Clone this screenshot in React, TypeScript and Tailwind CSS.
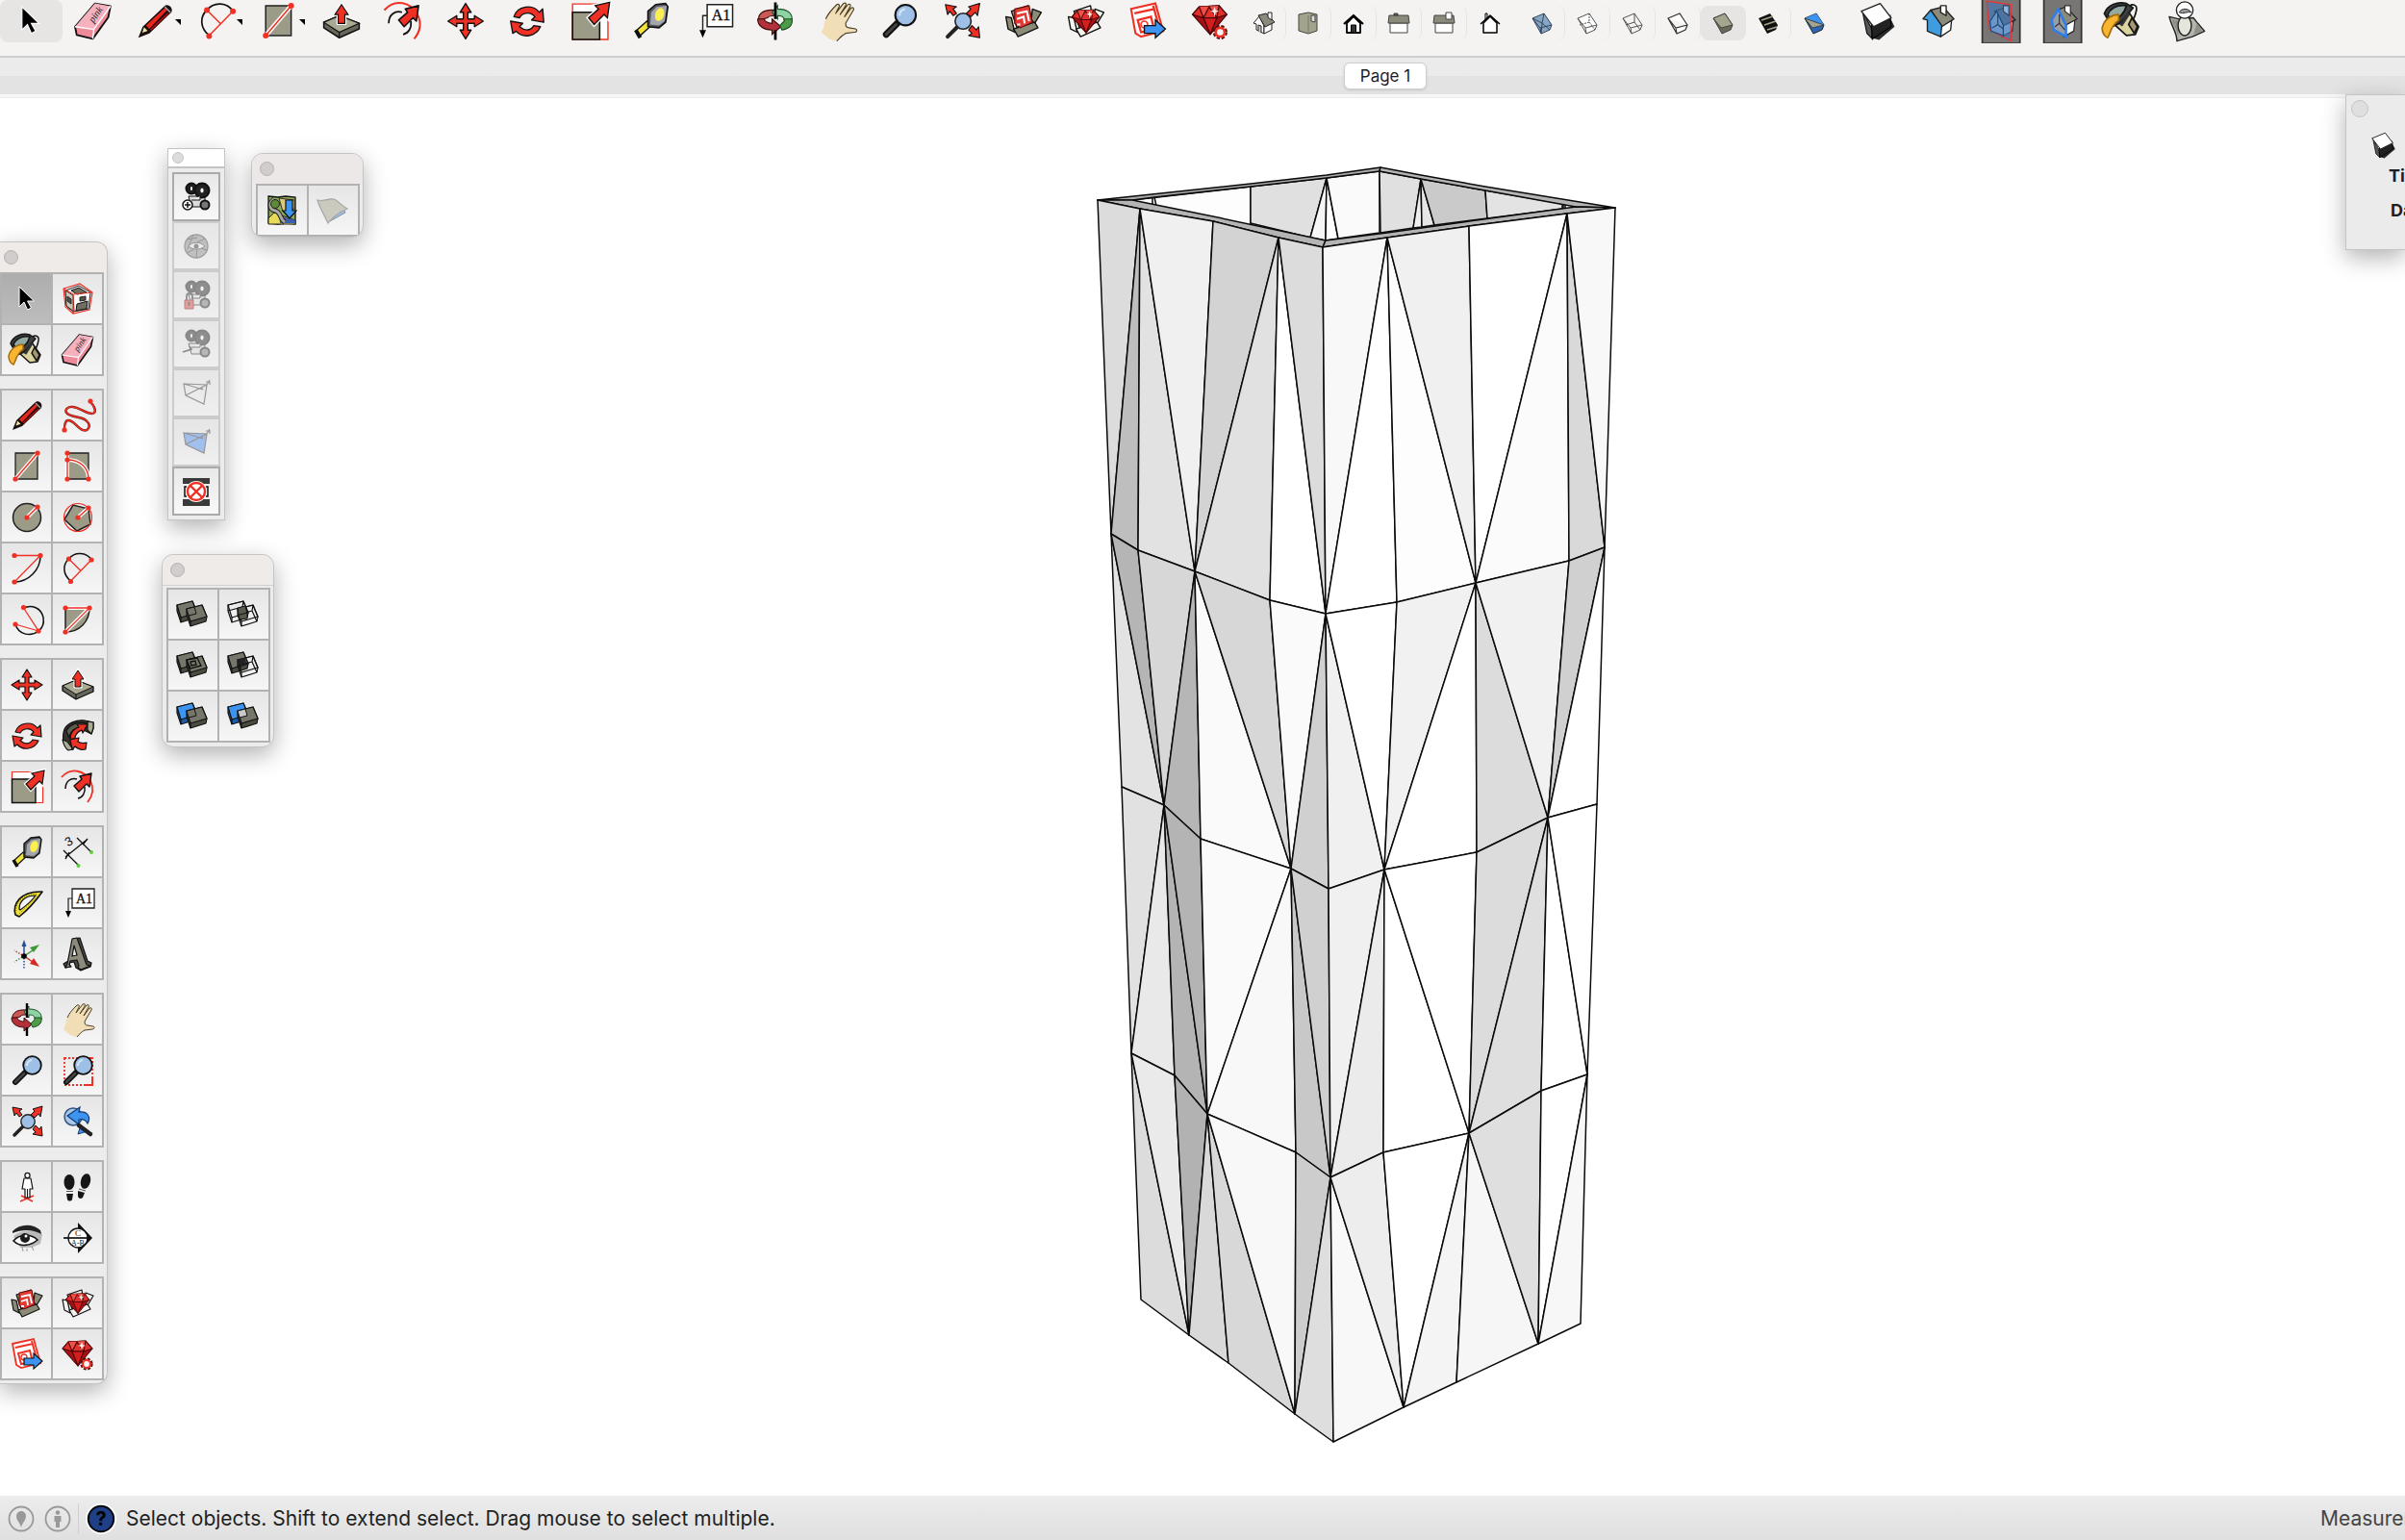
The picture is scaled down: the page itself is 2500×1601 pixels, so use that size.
import type { ReactNode } from "react";

const RED = "#ee3124";
const TAN = "#9c9b87";
const BLUE = "#3d94f0";

const Dot = ({ x, y }: { x: number; y: number }) => (
  <circle cx={x} cy={y} r="2.6" fill={RED} />
);

const lens = (
  <>
    <path d="M18 22 8 32" stroke="#111" strokeWidth="6" strokeLinecap="round" />
    <path d="M17 23 8 32" stroke="#444" strokeWidth="2.5" strokeLinecap="round" />
    <circle cx="25.5" cy="14.5" r="9.3" fill="#9fc0e6" stroke="#111" strokeWidth="1.8" />
    <path d="M20 15a6 6 0 0 1 5-6" stroke="#d6e6f8" strokeWidth="2" fill="none" />
  </>
);

const bucket = (
  <g stroke="#161616" strokeWidth="1.5" strokeLinejoin="round">
    <path d="M25 8c2-5 8-3 7 2s-2 8-4 9" fill="none" />
    <path d="M12 23 23 9l11 16-3 7-8 1z" fill="#dcd4a0" />
    <path d="m28 17 5 8-3 6-5-8z" fill="#a39873" />
    <path d="M3 13C6 5 15 2 23 4l6 4-12 14-7 3z" fill="#3c4042" />
    <path d="M6 14c3-6 9-9 17-8-2 7-7 12-14 13z" fill="#93aaa3" />
    <path d="M16 14C10 14 3 18 1 26c0 4 2 8 5 9 3-4 2-10 10-16z" fill="#f7b531" stroke="#a56c0b" />
    <path d="m18 24 7-11" strokeWidth="3" stroke="#333" />
  </g>
);

const boxBack = (fill: string) => (
  <g fill={fill} stroke="#111" strokeWidth="1.2" strokeLinejoin="round">
    <path d="m9 11 15-5 2 13-12 7z" />
    <path d="m4 16 5 1 3 13-6-3z" />
    <path d="m28 9 8 3-6 10-3-3z" />
    <path d="m11 27 19-6 3 5-18 8z" />
  </g>
);

const gem = (
  <g stroke="#4a0508" strokeWidth="1.1" strokeLinejoin="round">
    <path d="m4 14 6-7 18-1 7 8-15 18z" fill="#a81016" />
    <path d="m4 14 6-7 18-1 7 8-9 3H14z" fill="#e2302a" />
    <path d="m10 7 4 10 5-10 7 10 2-11" fill="#f05048" />
    <path d="m14 17 6 15 6-15z" fill="#d3201f" />
    <path d="m24 7 1 3 3 1-3 1-1 4-1-4-3-1 3-1z" fill="#ffe9e0" stroke="none" />
  </g>
);

const camera = (
  <g stroke="#111" strokeWidth="1">
    <path d="M12 19h17v11H15z" fill="#ddd" />
    <circle cx="15" cy="11" r="5.5" fill="#222" strokeWidth="2" />
    <circle cx="26" cy="13" r="7.5" fill="#222" strokeWidth="2" />
    <path d="M15 23h9v-4" fill="#eee" />
    <circle cx="29" cy="28" r="4.5" fill="#777" strokeWidth="2" />
    <ellipse cx="15" cy="11" rx="1.6" ry="2.6" fill="#fff" />
    <ellipse cx="26" cy="13" rx="2.2" ry="3" fill="#fff" />
  </g>
);

const slab = (x: number, y: number, fill: string, side: string) => (
  <g transform={`translate(${x} ${y})`} stroke="#111" strokeWidth="1.2" strokeLinejoin="round">
    <path d="m0 4 16-4 5 12-1 5-16 5-4-12z" fill={side} />
    <path d="m0 4 16-4 5 12-17 5z" fill={fill} />
    {fill !== "none" && <path d="m4 17v5" />}
    {fill === "none" && <path d="M4 17v5M0 10l15-4 5 11M16 0l-1 6" fill="none" />}
  </g>
);

const tools: Record<string, ReactNode> = {
  Select: (
    <path d="M12 7v21l5-5 3.500 8 4-2-4-7h7z" fill="#000" stroke="#fff" strokeWidth="1" />
  ),
  Component: (
    <>
      <path d="m7 11 14-5 12 7-2 17-16 3-7-6z" fill="#fff" stroke="#222" />
      <path d="m7 11 8 5 1 17-8-6z" fill="#c9c8bd" stroke="#222" />
      <path d="m13 11 8-3 8 5-10 2zM19 25l11-3-1 8-11 2z" fill="#6f6e60" stroke="#111" />
      <path d="m9 17 4 3v5l-4-3zM22 18l6-1v4l-6 1z" fill="#55544a" stroke="#222" />
      <path d="m5 9 17-5 13 9-3 18-17 4-8-7zm0 0 10 6 20-2M15 15v20" fill="none" stroke={RED} strokeWidth="1.200" />
    </>
  ),
  Paint: bucket,
  Eraser: (
    <>
      <path d="M3.500 25 21.500 4l14 2.500-2 10L19.500 36 5 32.500z" fill="#ee8b9b" stroke="#111" strokeWidth="1.600" strokeLinejoin="round" />
      <path d="M3.500 25 21.500 4l14 2.500-15 21z" fill="#f6b1bf" />
      <path d="m3.500 25 17 2.500 15-21M20.500 27.500l-1 8.500" fill="none" stroke="#fff" strokeWidth="1.200" />
      <text x="0" y="0" transform="translate(20 22) rotate(-55)" fontSize="9" fontFamily="Liberation Serif, serif" fontStyle="italic" fill="#222">
        pink
      </text>
    </>
  ),
  Line: (
    <>
      <path d="m5 35 4-10L29 6c2-2 8 1 6 6L15 31z" fill="#1a0b0b" />
      <path d="M12 24 29 8l2 2-16 17z" fill="#e8261d" />
      <path d="m16 28 16-15" stroke="#a80f10" strokeWidth="1.500" />
      <path d="m8 31 2-6 4 4z" fill="#f4e9a4" stroke="#111" strokeWidth=".7" />
      <path d="m29 7 5 5" stroke="#999" strokeWidth="1.500" />
    </>
  ),
  Freehand: (
    <>
      <path
        d="M33 6c4 4 6 9 4 11-4 4-14-5-22-6-6-1-10 4-6 7 6 5 18 2 22 10 2 4-1 9-6 7-6-2-9-10-15-10-3 0-4 4-4 9"
        fill="none"
        stroke="#6d1010"
        strokeWidth="2.400"
      />
      <path
        d="M33 6c4 4 6 9 4 11-4 4-14-5-22-6-6-1-10 4-6 7 6 5 18 2 22 10 2 4-1 9-6 7-6-2-9-10-15-10-3 0-4 4-4 9"
        fill="none"
        stroke={RED}
        strokeWidth="1.400"
      />
      <Dot x={33} y={5} />
      <Dot x={6} y={35} />
    </>
  ),
  Rectangle: (
    <>
      <path d="M8 6h23v27H8z" fill={TAN} stroke="#222" strokeWidth="1.300" />
      <path d="M8 33 31 6" stroke="#fff" strokeWidth="4" />
      <path d="M8 33 31 6" stroke={RED} strokeWidth="1.400" />
      <Dot x={8} y={33} />
      <Dot x={31} y={6} />
    </>
  ),
  "Rotated Rectangle": (
    <>
      <path d="M9 6h22v27H9z" fill={TAN} stroke="#222" strokeWidth="1.300" />
      <path d="M9 6v27M9 13c13 0 22 8 22 20" stroke="#fff" strokeWidth="4" fill="none" />
      <path d="M9 6v27M9 13c13 0 22 8 22 20" stroke={RED} strokeWidth="1.400" fill="none" />
      <Dot x={9} y={6} />
      <Dot x={9} y={13} />
      <Dot x={9} y={33} />
      <Dot x={31} y={33} />
    </>
  ),
  Circle: (
    <>
      <circle cx="20" cy="20" r="14.500" fill={TAN} stroke="#222" strokeWidth="1.500" />
      <path d="m20 20 11-11" stroke="#fff" strokeWidth="4" />
      <path d="m20 20 11-11" stroke={RED} strokeWidth="1.400" />
      <Dot x={20} y={20} />
      <Dot x={31} y={9} />
    </>
  ),
  Polygon: (
    <>
      <path d="m6 22 9-15 16 4 2 16-14 7z" fill={TAN} stroke="#222" strokeWidth="1.500" />
      <circle cx="20" cy="20" r="14.500" fill="none" stroke={RED} strokeWidth="1.200" />
      <path d="m20 20 11-10" stroke="#fff" strokeWidth="4" />
      <path d="m20 20 11-10" stroke={RED} strokeWidth="1.400" />
      <Dot x={20} y={20} />
      <Dot x={31} y={10} />
    </>
  ),
  Arc: (
    <>
      <path d="M34 7c0 14-12 27-27 27" fill="none" stroke="#111" strokeWidth="1.500" />
      <path d="M7 6.500h27L7 34" fill="none" stroke={RED} strokeWidth="1.300" />
      <Dot x={7} y={6.5} />
      <Dot x={34} y={6.5} />
      <Dot x={7} y={34} />
    </>
  ),
  "2 Point Arc": (
    <>
      <path d="M12.500 33C4 26 4 16 10.500 10 17 2 29 3 34 11" fill="none" stroke="#111" strokeWidth="1.500" />
      <path d="m10.500 10 12 12M12.500 33 34 11" stroke={RED} strokeWidth="1.300" />
      <Dot x={10.5} y={10} />
      <Dot x={34} y={11} />
      <Dot x={12.5} y={33.5} />
    </>
  ),
  "3 Point Arc": (
    <>
      <path d="M16.500 8C25 4 35 8 37 18c1 6-1 11-5 14-9 7-21 3-24-7" fill="none" stroke="#111" strokeWidth="1.500" />
      <path d="M16.500 8 32 32 8 25" fill="none" stroke={RED} strokeWidth="1.300" />
      <Dot x={16.5} y={7.5} />
      <Dot x={32} y={32} />
      <Dot x={8} y={25} />
    </>
  ),
  Pie: (
    <>
      <path d="M7 8h25c0 14-10 25-25 25z" fill={TAN} stroke="#222" strokeWidth="1.500" />
      <path d="M7 8h25L7 33" fill="none" stroke="#fff" strokeWidth="4" />
      <path d="M7 8h25L7 33" fill="none" stroke={RED} strokeWidth="1.300" />
      <Dot x={7} y={8} />
      <Dot x={32} y={8} />
      <Dot x={7} y={33} />
    </>
  ),
  Move: (
    <path
      d="m20 4 5 8h-3v6h6v-3l8 5-8 5v-3h-6v6h3l-5 8-5-8h3v-6h-6v3l-8-5 8-5v3h6v-6h-3z"
      fill={RED}
      stroke="#111"
      strokeWidth="1.200"
      strokeLinejoin="round"
    />
  ),
  "Push/Pull": (
    <>
      <path d="m4 21 14-6 18 7v5L18 35 4 26z" fill="#66665a" stroke="#111" strokeWidth="1.300" strokeLinejoin="round" />
      <path d="m4 21 14-6 18 7-18 8z" fill="#a9a994" stroke="#111" strokeWidth="1" />
      <path d="M18 30v5" stroke="#111" />
      <path d="M20 5 14 14h3v8h6v-8h3z" fill={RED} stroke="#fff" strokeWidth="3" />
      <path d="M20 5 14 14h3v8h6v-8h3z" fill={RED} stroke="#111" strokeWidth="1" />
    </>
  ),
  Rotate: (
    <g fill={RED} stroke="#111" strokeWidth="1.200" strokeLinejoin="round">
      <path d="M8 16c3-10 17-12 23-4l3-3 1 12-11-2 3-3c-4-5-11-4-14 1z" />
      <path d="M32 25c-4 9-16 11-22 4l-3 2-2-11 11 2-3 3c5 4 10 4 13-1z" />
    </g>
  ),
  "Follow Me": (
    <g stroke="#111" strokeWidth="1.200" strokeLinejoin="round">
      <path d="M10 34C5 31 3 22 6 13 9 7 18 3 27 4l9 2v6l-2 6-6-3-8-1c-4 2-5 7-4 11l-1 9z" fill="#33342f" />
      <path d="M8 15C11 8 20 5 29 7l-5 4c-7 0-12 4-13 11z" fill="#5d5d51" />
      <path d="m30 5 6 1v6l-2 6-4-4z" fill="#a9a994" />
      <path d="m4 24 5 2 6 8-5 1c-3-2-5-6-6-11z" fill="#a9a994" />
      <path d="M12 23c0-6 3-10 9-12l-2-3 11 0-5 9-1-3c-5 2-7 5-7 9z" fill={RED} />
      <path d="m12 24 9-2-1 4c3 2 5 2 9 1l-1 7c-5 1-8 0-11-3l-3 3z" fill={RED} />
    </g>
  ),
  Scale: (
    <>
      <path d="M4.500 4.500h32v32h-32z" fill="#fff" stroke={RED} strokeWidth="1.200" />
      <path d="M4.500 12h24.500v24.500H4.500z" fill={TAN} stroke="#111" strokeWidth="1.400" />
      <path d="m38 3-13 3 3 3-9 8 5 6 9-9 3 3z" fill={RED} stroke="#fff" strokeWidth="3.500" />
      <path d="m38 3-13 3 3 3-9 8 5 6 9-9 3 3z" fill={RED} stroke="#111" strokeWidth="1.200" />
    </>
  ),
  Offset: (
    <>
      <path d="M3 10C13-1 27 3 33 14c4 8 2 16-3 22" fill="none" stroke={RED} strokeWidth="1.800" />
      <path d="M7 22c0-8 6-12 12-10M27 20c1 6-2 11-7 12" fill="none" stroke="#111" strokeWidth="1.500" />
      <path d="m34 6-12 3 2 3-8 7 5 6 8-8 3 3z" fill={RED} stroke="#111" strokeWidth="1.400" strokeLinejoin="round" />
    </>
  ),
  "Tape Measure": (
    <>
      <path d="M6 29 16 20l4 4L9 34z" fill="#f2e33b" stroke="#111" strokeWidth="1.200" />
      <path d="m6 28 4 7" stroke="#111" strokeWidth="3.500" />
      <path d="m17 11 7-6 9-1 2 3-2 14-6 5-10-1z" fill="#55575b" stroke="#111" strokeWidth="1.400" strokeLinejoin="round" />
      <path d="m20 12 5-5 9-1-2 14-5 4-8-1z" fill="#a3a6ad" />
      <ellipse cx="27.500" cy="14" rx="4" ry="6" transform="rotate(18 27.500 14)" fill="#fbf04f" />
    </>
  ),
  Dimension: (
    <>
      <path d="M7 25 28 8M5 18l16 16M19 5l15 15" stroke="#111" strokeWidth="1.300" />
      <path d="m7 27 4-7M25 12l5-6" stroke="#111" strokeWidth="1.500" />
      <text x="7" y="13" transform="rotate(-30 11 9)" fontSize="13" fontFamily="Liberation Sans, sans-serif" fill="#111">
        3
      </text>
      <circle cx="20.500" cy="34" r="2" fill="#5bd03c" />
      <circle cx="34" cy="20" r="2" fill="#5bd03c" />
    </>
  ),
  Protractor: (
    <>
      <path d="M8 32C5 22 12 7 36 8 29 18 22 26 12 34z" fill="#f0e13a" stroke="#111" strokeWidth="1.600" strokeLinejoin="round" />
      <path d="M12 26c0-8 6-14 17-14-5 7-9 10-16 15z" fill="#f4f4f4" stroke="#111" strokeWidth="1.200" />
      <path d="m12 31 21-20M9 28c-1-8 6-17 22-18" stroke="#5b5410" strokeWidth=".8" strokeDasharray="1 1.500" fill="none" />
    </>
  ),
  Text: (
    <>
      <path d="M14 5h23v20H14z" fill="#fff" stroke="#222" strokeWidth="1.300" />
      <text x="18" y="19.500" fontSize="14" fontFamily="Liberation Serif, serif" fill="#111" stroke="#111" strokeWidth=".3">
        A1
      </text>
      <path d="M14 15h-4v15" fill="none" stroke="#222" strokeWidth="1.200" />
      <path d="M7 28h6l-3 7z" fill="#000" />
    </>
  ),
  Axes: (
    <>
      <path d="M17 22V10" stroke="#244d97" strokeWidth="1.500" />
      <path d="M14.500 12 17 5l2.500 7z" fill="#244d97" />
      <path d="m17 22 9-6" stroke="#3c9a37" strokeWidth="1.500" />
      <path d="m23 13 10-3-6 8z" fill="#3c9a37" />
      <path d="m17 22 9 6" stroke="#d22c25" strokeWidth="1.500" />
      <path d="m23 30 4-6 6 9z" fill="#d22c25" />
      <path d="M17 24v11" stroke="#244d97" strokeWidth="1.500" strokeDasharray="1.500 1.500" />
      <path d="m15 23-8 5" stroke="#3c9a37" strokeWidth="1.500" strokeDasharray="1.500 1.500" />
      <path d="m15 21-8-5" stroke="#d22c25" strokeWidth="1.500" strokeDasharray="1.500 1.500" />
      <circle cx="17" cy="22" r="2.800" fill="#000" />
    </>
  ),
  "3D Text": (
    <g stroke="#111" strokeWidth="1.200" strokeLinejoin="round">
      <path d="m15 4 7-1 8 24 4 2-1 4-10 4-5-3-2-6-5 1 1 4-5 1-2-4 5-3z" fill="#4c4c44" />
      <path d="m14 4 5-1 10 28 4 1-10 4-3-2 1-2-2-6-7 1-1 4 2 2-6 1 2-4z" fill="#8b8a7b" />
      <path d="m16 11 3 10-5 1z" fill="#eee" />
    </g>
  ),
  Orbit: (
    <>
      <path d="M19 10C9 9 4 14 5 19l8-2c1-2 3-2 6-2z" fill="#c95b57" stroke="#3c0b0b" />
      <path d="M22 9c9 0 14 4 13 11l-7-1c0-3-2-4-6-4v3l-5-6 5-6z" fill="#8fd2a4" stroke="#1b5027" />
      <path d="M4 18c0 6 5 10 13 10v4l8-7-8-7v4c-4 0-7-2-7-4z" fill="#b4303a" stroke="#3c0b0b" />
      <path d="M35 18c1 6-3 9-9 10l-2-4 4-4v-2z" fill="#4f9c48" stroke="#1b5027" />
      <path d="M20 3v15M20 28v9" stroke="#000" strokeWidth="2.400" />
    </>
  ),
  Pan: (
    <>
      <path
        d="M5 30c3-4 2-8 4-12 2-5 6-9 10-13 2-1 3 1 2 2l-3 6 7-9c2-1 3 0 2 2l-5 8 7-9c2-1 3 0 2 2l-5 9 6-8c2-1 3 1 2 2l-7 12c0 3 1 4 3 4l6 1c2 1 1 3-1 3l-8 1c-4 2-5 4-8 7l-7-2z"
        fill="#f2deb6"
      />
      <path
        d="M9 18c2-5 6-9 10-13 2-1 3 1 2 2l-3 6 7-9c2-1 3 0 2 2l-5 8 7-9c2-1 3 0 2 2l-5 9 6-8c2-1 3 1 2 2l-7 12c0 3 1 4 3 4l6 1c2 1 1 3-1 3l-8 1c-4 2-5 4-8 7"
        fill="none"
        stroke="#4a4028"
        strokeWidth="1"
        strokeLinejoin="round"
      />
    </>
  ),
  Zoom: lens,
  "Zoom Window": (
    <>
      <path d="M6 7h29v28H6z" fill="none" stroke={RED} strokeWidth="1.800" strokeDasharray="2 2" />
      <path d="M28 35h7v-8M29 7h6" fill="none" stroke={RED} strokeWidth="2" />
      {lens}
    </>
  ),
  "Zoom Extents": (
    <>
      <path d="M16 25 7 34" stroke="#222" strokeWidth="3.500" strokeLinecap="round" />
      <circle cx="21" cy="20" r="7.200" fill="#9fc0e6" stroke="#222" strokeWidth="1.400" />
      <g fill={RED} stroke="#111" strokeWidth="1" strokeLinejoin="round">
        <path d="m5 5 10 2-3 2 3 4-3 2-3-4-2 3z" />
        <path d="m36 4-10 3 2 2-4 4 4 3 4-4 2 3z" />
        <path d="m36 35-1-10-2 3-4-4-3 4 3 3-3 2z" />
      </g>
    </>
  ),
  "Previous View": (
    <>
      <circle cx="15" cy="15" r="9" fill="#a9c8ea" stroke="#33557f" strokeWidth="1.500" />
      <path d="m20 33 3-9 7 6z" fill={BLUE} stroke="#123a70" />
      <path d="m9 14 13-9-1 5c9-1 13 5 9 12-2-4-5-5-9-4v5z" fill={BLUE} stroke="#123a70" strokeWidth="1.200" />
      <path d="m21 24 12 9" stroke="#222" strokeWidth="4.500" strokeLinecap="round" />
    </>
  ),
  "Position Camera": (
    <>
      <path d="m13 35 14-6M14 29l12 6" stroke={RED} strokeWidth="1.500" />
      <path d="m17 11-2 11h3v9h5v-9h3l-2-11z" fill="#fff" stroke="#111" strokeWidth="1.200" strokeLinejoin="round" />
      <path d="M20.500 22v9" stroke="#111" />
      <circle cx="20.500" cy="8" r="2.600" fill="#fff" stroke="#111" strokeWidth="1.200" />
    </>
  ),
  Walk: (
    <g fill="#161616">
      <ellipse cx="11" cy="15" rx="5.500" ry="8" />
      <ellipse cx="28" cy="14" rx="5" ry="8" transform="rotate(15 28 14)" />
      <path d="m8 27 7 0-1 6c-1 2-4 2-5 0z" />
      <path d="m20 24 7 2-2 5c-2 2-5 1-5-2z" />
      <path d="M8 24.500h7M21 22l7 2" stroke="#555" />
    </g>
  ),
  "Look Around": (
    <>
      <path d="M6 18c6-6 22-8 30-2l-2 10-9 4H13z" fill="#b9b9b9" />
      <path d="M5 13c8-8 21-8 29-1l1 4c-9-5-20-5-30-1z" fill="#222" />
      <path d="M6 23c6-7 18-8 25-1-7 6-18 8-25 1z" fill="#fff" stroke="#111" strokeWidth="1.600" />
      <circle cx="18" cy="20" r="5" fill="#1a1a1a" />
      <circle cx="19" cy="18" r="1.500" fill="#fff" />
      <path d="m15 29 1 5M20 31v3M25 29l2 4" stroke="#999" />
    </>
  ),
  "Section Plane": (
    <>
      <path d="m20 4 15 16-15 16z" fill="#111" />
      <circle cx="20" cy="20" r="10" fill="#fff" stroke="#111" strokeWidth="1.300" />
      <path d="M5 20h29" stroke="#111" strokeWidth="1.700" />
      <text x="20" y="18" textAnchor="middle" fontSize="9" fontFamily="Liberation Serif, serif" fill="#111">
        C
      </text>
      <text x="20" y="28" textAnchor="middle" fontSize="8" fontFamily="Liberation Serif, serif" fill="#111">
        A-B
      </text>
    </>
  ),
  "3D Warehouse": (
    <>
      {boxBack("#8c8b78")}
      <path d="m12 9 13-3 3 15-11 5-5-4z" fill="#e23a33" stroke="#5e0e0b" strokeWidth="1" />
      <path d="m14 13 9-2 2 9M14 18l6-2 1 6M14 23l3 0" fill="none" stroke="#fff" strokeWidth="1.800" />
    </>
  ),
  "Extension Warehouse": (
    <>
      {boxBack("#f3f3f0")}
      <g transform="translate(4 5) scale(.8)">{gem}</g>
    </>
  ),
  "Send to LayOut": (
    <>
      <path d="m5 9 22-5 7 25-20 5-5-3z" fill="#fff" stroke={RED} strokeWidth="1.800" />
      <path d="m8 13 18-4M25 6l6 22M11 19l12-3 3 12-12 2z" stroke={RED} strokeWidth="2" fill="none" />
      <circle cx="17" cy="23" r="3" fill="none" stroke={RED} strokeWidth="1.300" />
      <path d="M17 24h10v-5l9 8-9 8v-4H17z" fill={BLUE} stroke="#111" strokeWidth="1.200" />
    </>
  ),
  "Extension Manager": (
    <>
      {gem}
      <circle cx="29" cy="30" r="4.800" fill="#f4f3f1" stroke="#5e0e0b" strokeWidth="3.600" strokeDasharray="2.500 1.300" />
      <circle cx="29" cy="30" r="4" fill="#f8f4f4" stroke={RED} strokeWidth="2.200" />
    </>
  ),
  Shadows: (
    <>
      <path d="m15 35 7 2 14-12-3-6z" fill="#2b2b2b" />
      <path d="m7 11 4 20 5 5-1-10z" fill="#555" stroke="#111" />
      <path d="m15 24 17-9 1 10-17 11z" fill="#222" stroke="#000" />
      <path d="m6 11 17-7 10 13-16 8z" fill="#fff" stroke="#222" strokeWidth="1.200" strokeLinejoin="round" />
    </>
  ),
  "Section Cut": (
    <g stroke="#222" strokeWidth="1.200" strokeLinejoin="round">
      <path d="m21 24 11-6-1 10-9 6z" fill="#fff" />
      <path d="m13 10 11-3 10 11-11 7z" fill="#8b8a7b" />
      <path d="m6 18 7-8 10 14-1 10-12-5V19z" fill="#419cdf" />
      <path d="M22 6h5v9l-5-3z" fill="#fff" />
    </g>
  ),
  Crop: (
    <>
      <path d="M4 0h34v40H4z" fill="#777675" stroke="#333" strokeWidth="1.500" />
      <path d="m22 24 10-4-1 9-9 5z" fill="#b9d6f5" stroke="#222" />
      <path d="m15 11 9-3 10 11-11 5z" fill="#6a6b72" stroke="#222" />
      <path d="m8 2 22 3v33L10 27z" fill="#3f78b8" fillOpacity=".65" stroke="#e0393a" strokeWidth="1.200" />
      <path d="m11 20 6-9 6 13v9l-11-4z" fill="#6b96c6" stroke="#1d4778" />
      <path d="m13 26 5-3 5 4M18 14v9" stroke="#1d4778" />
      <path d="M23 6h5v9l-5-4z" fill="#8fb6ea" stroke="#345" />
    </>
  ),
  Outline: (
    <>
      <path d="M4 0h34v40H4z" fill="#777675" stroke="#333" strokeWidth="1.500" />
      <path d="m22 24 10-5-1 10-9 5z" fill="#fff" stroke="#222" />
      <path d="m16 10 8-3 10 11-11 6z" fill="#8b8a7b" stroke="#222" />
      <path d="m11 19 6-10 7 15v10l-11-6z" fill="#9a9da3" stroke="#2f7ee6" strokeWidth="2.200" />
      <path d="m14 25 4-3 5 6M18 14v8" stroke="#333" />
      <path d="M23 6h5v9l-5-4z" fill="#fff" stroke="#333" />
    </>
  ),
  Material: (
    <g stroke="#222" strokeWidth="1.200" strokeLinejoin="round">
      <path d="m6 16 8 2 14-1 3 4 7 8-11 5-14 4c0-8-5-13-7-22z" fill="#b4b6ac" />
      <path d="m8 18 7 2-1 16C14 29 10 25 8 18zM31 22l5 7-8 3z" fill="#8f9188" stroke="none" />
      <ellipse cx="20" cy="24" rx="6" ry="9" fill="#e4e6dc" />
      <circle cx="20" cy="10" r="7.500" fill="#fff" />
      <path d="M15 12c2-4 8-4 11 0-4-1-7 2-11 0z" fill="#999" strokeWidth=".8" />
    </g>
  ),
  "Add Scene Camera": (
    <>
      {camera}
      <circle cx="11" cy="28" r="5" fill="#fff" stroke="#111" strokeWidth="1.500" />
      <path d="M11 25v6M8 28h6" stroke="#111" strokeWidth="1.500" />
    </>
  ),
  "Look Through": (
    <>
      <circle cx="20" cy="20" r="12" fill="#8d8d8d" stroke="#444" strokeWidth="1.300" />
      <path d="m10 13 11-2M17 8l-6 15M29 12l-8 4M31 24l-10-3M20 32l1-9M10 27l8-4" stroke="#333" />
      <path d="M12 20c4-5 12-5 17 0-5 4-12 4-17 0z" fill="#eee" stroke="#333" />
      <circle cx="20" cy="20" r="2.500" fill="#333" />
    </>
  ),
  "Lock Camera": (
    <>
      {camera}
      <path d="M10 25v-4a3 3 0 0 1 6 0v4" fill="none" stroke="#222" strokeWidth="1.800" />
      <path d="M8 25h9v9H8z" fill="#e13b2f" stroke="#611" />
      <path d="M12.500 27v4" stroke="#222" strokeWidth="2" />
    </>
  ),
  "Show Camera": (
    <>
      {camera}
      <path d="m6 28 9-3-2-3" fill="none" stroke="#111" strokeWidth="1.500" />
    </>
  ),
  "Frustum Lines": (
    <path d="m7 10 24 1-3 20L9 22zM7 10l20 6-2-2M31 11 9 22M31 11l3-5m-4 2h4v3" fill="none" stroke="#333" strokeWidth="1.200" />
  ),
  "Frustum Volume": (
    <>
      <path d="m7 10 24 1-3 20L9 22z" fill="#4b8cf0" />
      <path d="m7 10 24 1-3 20L9 22zM7 10l20 6-2-2M31 11 9 22M31 11l3-5m-4 2h4v3" fill="none" stroke="#333" strokeWidth="1.200" />
    </>
  ),
  "Clear Aspect Ratio": (
    <>
      <path d="M6 6h28v6H6zM6 28h28v7H6z" fill="#3a3a3a" />
      <path d="M10 15H8v10h2M30 15h2v10h-2" fill="none" stroke="#111" strokeWidth="1.500" />
      <circle cx="20" cy="20" r="9.500" fill="#fff" stroke="#fff" strokeWidth="3" />
      <circle cx="20" cy="20" r="9" fill="#fff" stroke={RED} strokeWidth="2.400" />
      <path d="m14 14 12 12M26 14 14 26" stroke={RED} strokeWidth="2.400" />
    </>
  ),
  "Add Location": (
    <>
      <path d="m6 5 10 1 8-1 10 1v28l-9-1-9 1-10-1z" fill="#8dab52" stroke="#111" strokeWidth="1.300" />
      <path d="m17 7 16 2v9l-12 3z" fill="#dcc976" stroke="#333" />
      <path d="m6 28 6-6 22 8v4H6z" fill="#e8d957" stroke="#222" />
      <path d="m17 25 17 5v3H18z" fill="#3b5eb0" />
      <path d="M12 8c-6 4-5 11 1 12s5 9 10 12" fill="none" stroke="#222" strokeWidth="5" />
      <path d="M12 8c-6 4-5 11 1 12s5 9 10 12" fill="none" stroke="#a9a99f" strokeWidth="3" />
      <circle cx="13" cy="13" r="4.500" fill="#5c8a35" stroke="#222" />
      <path d="M24 9h7v11h4l-7 8-7-8h3z" fill={BLUE} stroke="#111" strokeWidth="1.200" />
    </>
  ),
  "Toggle Terrain": (
    <>
      <path d="m15 32 18-10-4-7-16 9z" fill="#5e9de6" stroke="#456" />
      <path d="M4 9c8 2 10-2 17-1 4 1 8 7 14 10-7 3-15 8-20 15-3-7-8-14-11-24z" fill="#b4b3a0" stroke="#777" strokeWidth="1.200" />
    </>
  ),
};

const solids: Record<string, ReactNode> = {
  "Outer Shell": (
    <>
      {slab(4, 6, "#76766a", "#4b4b42")}
      {slab(14, 10, "#76766a", "#4b4b42")}
      <path d="m14 14 8-2 2 7-8 2z" fill="#76766a" stroke="#111" />
    </>
  ),
  Intersect: (
    <>
      {slab(4, 6, "none", "none")}
      {slab(14, 10, "none", "none")}
      <path d="m14 13 8-2 2 8v5l-8 1z" fill="#5a594d" stroke="#111" />
      <path d="m16 20 8-2" stroke="#111" />
    </>
  ),
  Union: (
    <>
      {slab(4, 6, "#76766a", "#4b4b42")}
      {slab(14, 10, "#76766a", "#4b4b42")}
      <path d="m14 14 11-2 4 8-11 3zM18 16l5-1 1 4-5 1z" fill="none" stroke="#111" strokeWidth="1.300" />
    </>
  ),
  Subtract: (
    <>
      {slab(4, 6, "#76766a", "#4b4b42")}
      {slab(14, 10, "none", "none")}
      <path d="m14 14 8-2 1 5-5 2v5z" fill="#222" />
    </>
  ),
  Trim: (
    <>
      {slab(4, 6, "#3d94f0", "#1d5ca8")}
      {slab(14, 10, "#76766a", "#4b4b42")}
      <path d="m14 14 8-2 2 7-8 2z" fill="#76766a" stroke="#111" />
    </>
  ),
  Split: (
    <>
      {slab(4, 6, "#3d94f0", "#1d5ca8")}
      {slab(14, 10, "#76766a", "#4b4b42")}
      <path d="m14 14 8-2 2 7-8 2z" fill="#c9c9c9" stroke="#111" />
    </>
  ),
};

const small: Record<string, ReactNode> = {
  Iso: (
    <g stroke="#222" strokeWidth="1" strokeLinejoin="round">
      <path d="m2 12 6-7 5 10v8l-8-4v-6z" fill="#fff" />
      <path d="m13 15 8-3v7l-8 4z" fill="#fff" />
      <path d="m7 4 8-2 9 9-10 5z" fill="#8b8a7b" />
      <path d="M17 1h4v8l-4-3z" fill="#fff" />
      <path d="M7 20v-6l3 1v7" fill="#ccc" />
    </g>
  ),
  Top: (
    <g stroke="#444" strokeWidth="1">
      <path d="m2 3 10-2 9 2v17l-9 3-10-3z" fill="#a3a28d" />
      <path d="M12 4v19" stroke="#7a7968" />
      <path d="M15 4h4v7l-4-1z" fill="#ddd" />
    </g>
  ),
  Front: (
    <g stroke="#000" strokeLinejoin="round">
      <path d="M5 12v10h14V12l-7-7z" fill="#fff" strokeWidth="1.800" />
      <path d="m2 13 10-9 10 9" fill="none" strokeWidth="2.200" />
      <path d="M9.500 22v-8h5v8z" fill="#333" />
    </g>
  ),
  Right: (
    <g stroke="#444" strokeWidth="1">
      <path d="M3 12h18v10H3z" fill="#fff" />
      <path d="M2 4h20l1 8H1z" fill="#8b8a7b" />
      <path d="M7 2h4v2H7z" fill="#555" />
    </g>
  ),
  Back: (
    <g stroke="#444" strokeWidth="1">
      <path d="M3 12h18v10H3z" fill="#fff" />
      <path d="M2 4h20l1 8H1z" fill="#8b8a7b" />
      <path d="M14 1h6v7h-6z" fill="#fff" />
    </g>
  ),
  Left: (
    <g stroke="#000" strokeLinejoin="round">
      <path d="M5 12v10h14V12l-7-7z" fill="#fff" strokeWidth="1.500" />
      <path d="M7 9V2h2v5" fill="none" />
      <path d="m2 13 10-9 10 9" fill="none" strokeWidth="1.500" />
    </g>
  ),
  "X-Ray": (
    <g stroke="#33475c" strokeWidth="1" strokeLinejoin="round">
      <path d="m2 7 12-5 8 12-2 5-9 4z" fill="#87a5c4" />
      <path d="m2 7 8 10 12-3M10 17l1 6M14 2l-2 10 8 7M2 7l10 5-1 11" fill="none" />
    </g>
  ),
  "Back Edges": (
    <g stroke="#555" strokeWidth="1" strokeLinejoin="round" fill="none">
      <path d="m2 7 12-5 8 12-2 5-9 4z" fill="#fff" />
      <path d="m2 7 8 10 12-3M10 17l1 6" />
      <path d="M14 2v9l6 8M14 11l-10 3" strokeDasharray="2 1" />
    </g>
  ),
  Wireframe: (
    <path d="m2 7 12-5 8 12-2 5-9 4zM2 7l8 10 12-3M10 17l1 6M14 2v9l6 8M14 11 5 14" fill="none" stroke="#555" strokeWidth="1" />
  ),
  "Hidden Line": (
    <path d="m2 7 12-5 8 12-2 5-9 4zM2 7l8 10 12-3M10 17l1 6" fill="#fff" stroke="#333" strokeWidth="1.200" />
  ),
  Shaded: (
    <g stroke="#444" strokeWidth="1">
      <path d="m2 7 12-5 8 12-2 5-9 4z" fill="#6a6957" />
      <path d="m2 7 12-5 8 12-12 3z" fill="#a5a48c" />
    </g>
  ),
  Textured: (
    <>
      <path d="m2 7 12-5 8 12-2 5-9 4z" fill="#111" />
      <path d="m5 9 12-4M8 14l12-4M11 19l10-3" stroke="#a5a48c" strokeWidth="1.600" />
    </>
  ),
  Monochrome: (
    <>
      <path d="m2 7 12-5 8 12-2 5-9 4z" fill="#2c66b4" stroke="#222" />
      <path d="m2 7 12-5 8 12z" fill={BLUE} />
      <path d="m2 7 20 7-12 3z" fill="#a5a48c" stroke="#333" strokeWidth=".8" />
    </>
  ),
};

const mainTools = [
  "Select", "Eraser", "Line", "2 Point Arc", "Rectangle", "Push/Pull", "Offset",
  "Move", "Rotate", "Scale", "Tape Measure", "Text", "Orbit", "Pan", "Zoom",
  "Zoom Extents", "3D Warehouse", "Extension Warehouse", "Send to LayOut", "Extension Manager",
];
const withMenu = ["Line", "2 Point Arc", "Rectangle"];
const views = ["Iso", "Top", "Front", "Right", "Back", "Left"];
const styles = ["X-Ray", "Back Edges", "Wireframe", "Hidden Line", "Shaded", "Textured", "Monochrome"];
const extras = ["Shadows", "Section Cut", "Crop", "Outline", "Paint", "Material"];

const largeToolSet = [
  ["Select", "Component", "Paint", "Eraser"],
  ["Line", "Freehand", "Rectangle", "Rotated Rectangle", "Circle", "Polygon", "Arc", "2 Point Arc", "3 Point Arc", "Pie"],
  ["Move", "Push/Pull", "Rotate", "Follow Me", "Scale", "Offset"],
  ["Tape Measure", "Dimension", "Protractor", "Text", "Axes", "3D Text"],
  ["Orbit", "Pan", "Zoom", "Zoom Window", "Zoom Extents", "Previous View"],
  ["Position Camera", "Walk", "Look Around", "Section Plane"],
  ["3D Warehouse", "Extension Warehouse", "Send to LayOut", "Extension Manager"],
];

const cameraTools = [
  { name: "Add Scene Camera", enabled: true },
  { name: "Look Through", enabled: false },
  { name: "Lock Camera", enabled: false },
  { name: "Show Camera", enabled: false },
  { name: "Frustum Lines", enabled: false },
  { name: "Frustum Volume", enabled: false },
  { name: "Clear Aspect Ratio", enabled: true },
];

// vase vertices: one row per horizontal ring, left to right
const rings: Record<string, number[][]> = {
  A: [[1141, 208], [1185, 217], [1261, 230], [1329, 247], [1375, 257], [1442, 247], [1527, 235], [1629, 222], [1679, 216]],
  B: [[1155, 555], [1183, 572], [1242, 594], [1320, 624], [1378, 638], [1452, 626], [1534, 606], [1631, 583], [1668, 569]],
  C: [[1166, 818], [1210, 837], [1248, 872], [1342, 903], [1381, 924], [1439, 904], [1535, 886], [1609, 850], [1660, 836]],
  D: [[1176, 1095], [1221, 1118], [1255, 1158], [1347, 1198], [1383, 1224], [1438, 1198], [1527, 1178], [1602, 1134], [1650, 1117]],
  E: [[1186, 1351], [1236, 1388], [1277, 1417], [1346, 1470], [1386, 1499], [1459, 1463], [1514, 1437], [1599, 1397], [1643, 1376]],
};

const faces: [string, string][] = [
  ["A0 A1 B0", "#dcdcdc"], ["A1 B0 B1", "#bebebe"], ["A1 B1 B2", "#e2e2e2"], ["A1 A2 B2", "#f0f0f0"],
  ["A2 A3 B2", "#d3d3d3"], ["A3 B2 B3", "#e1e1e1"], ["A3 B3 B4", "#ffffff"], ["A3 A4 B4", "#dcdcdc"],
  ["A4 A5 B4", "#f8f8f8"], ["A5 B4 B5", "#ffffff"], ["A5 B5 B6", "#fdfdfd"], ["A5 A6 B6", "#f0f0f0"],
  ["A6 A7 B6", "#ffffff"], ["A7 B6 B7", "#fbfbfb"], ["A7 B7 B8", "#d9d9d9"], ["A7 A8 B8", "#f8f8f8"],
  ["B0 C0 C1", "#e3e3e3"], ["B0 B1 C1", "#b5b5b5"], ["B1 B2 C1", "#d7d7d7"], ["B2 C1 C2", "#b6b6b6"],
  ["B2 C2 C3", "#fafafa"], ["B2 B3 C3", "#d7d7d7"], ["B3 B4 C3", "#fafafa"], ["B4 C3 C4", "#d0d0d0"],
  ["B4 C4 C5", "#f0f0f0"], ["B4 B5 C5", "#ffffff"], ["B5 B6 C5", "#f1f1f1"], ["B6 C5 C6", "#ffffff"],
  ["B6 C6 C7", "#dcdcdc"], ["B6 B7 C7", "#f1f1f1"], ["B7 B8 C7", "#d0d0d0"], ["B8 C7 C8", "#ffffff"],
  ["C0 C1 D0", "#e1e1e1"], ["C1 D0 D1", "#e9e9e9"], ["C1 D1 D2", "#b4b4b4"], ["C1 C2 D2", "#b4b4b4"],
  ["C2 C3 D2", "#fafafa"], ["C3 D2 D3", "#f8f8f8"], ["C3 D3 D4", "#c8c8c8"], ["C3 C4 D4", "#d0d0d0"],
  ["C4 C5 D4", "#f0f0f0"], ["C5 D4 D5", "#ebebeb"], ["C5 D5 D6", "#ffffff"], ["C5 C6 D6", "#ffffff"],
  ["C6 C7 D6", "#dcdcdc"], ["C7 D6 D7", "#dfdfdf"], ["C7 D7 D8", "#ffffff"], ["C7 C8 D8", "#ffffff"],
  ["D0 E0 E1", "#dcdcdc"], ["D0 D1 E1", "#eaeaea"], ["D1 D2 E1", "#b2b2b2"], ["D2 E1 E2", "#d9d9d9"],
  ["D2 E2 E3", "#d8d8d8"], ["D2 D3 E3", "#f8f8f8"], ["D3 D4 E3", "#cdcdcd"], ["D4 E3 E4", "#dedede"],
  ["D4 E4 E5", "#f8f8f8"], ["D4 D5 E5", "#ededed"], ["D5 D6 E5", "#ffffff"], ["D6 E5 E6", "#f4f4f4"],
  ["D6 E6 E7", "#f6f6f6"], ["D6 D7 E7", "#dfdfdf"], ["D7 D8 E7", "#ffffff"], ["D8 E7 E8", "#f7f7f7"],
];

const toPoints = (face: string) =>
  face
    .split(" ")
    .map((v) => rings[v[0]][Number(v[1])].join(","))
    .join(" ");

function Vase() {
  return (
    <svg viewBox="0 102 2500 1453" className="block h-full w-full" role="img" aria-label="Faceted vase model">
      <g stroke="#0a0a0a" strokeWidth="1.500" strokeLinejoin="round">
        <path d="M1177 208 1300 194V242z" fill="#fdfdfd" />
        <path d="M1300 194 1379 185 1362 247 1300 232z" fill="#e0e0e0" />
        <path d="M1379 185 1362 247 1378 250z" fill="#f6f6f6" />
        <path d="M1379 185 1378 250 1391 248z" fill="#fff" />
        <path d="M1379 185 1434 178V242L1391 248z" fill="#fafafa" />
        <path d="M1434 178 1477 186 1469 237 1435 242z" fill="#e0e0e0" />
        <path d="M1477 186 1469 237 1478 236z" fill="#eee" />
        <path d="M1477 186 1478 236 1491 234z" fill="#e6e6e6" />
        <path d="M1477 186 1544 198 1546 227 1491 234z" fill="#cacaca" />
        <path d="M1544 198 1625 212V217L1546 227z" fill="#e3e3e3" />
        <path d="M1198 205v8M1200 205l2 9M1624 211v6M1627 212v5" />
        {/* rim */}
        <path d="M1141 208 1300 191 1379 182 1435 174 1434 178 1379 185 1300 194 1200 205 1177 208z" fill="#a9a9a9" />
        <path d="M1435 174 1477 182 1544 194 1679 216 1638 215 1544 198 1477 186 1434 178z" fill="#b4b4b4" />
        <path d="M1141 208 1177 208 1261 225 1378 250 1375 257 1329 247 1261 230 1185 217z" fill="#b4b4b4" />
        <path d="M1679 216 1638 215 1527 230 1442 242 1378 250 1375 257 1442 247 1527 235 1629 222z" fill="#b4b4b4" />
        {faces.map(([face, fill]) => (
          <polygon key={face} points={toPoints(face)} fill={fill} />
        ))}
      </g>
    </svg>
  );
}

function Glyph({ name, big }: { name: string; big?: boolean }) {
  return (
    <svg viewBox="0 0 40 40" fill="none" className={big ? "size-[46px]" : "size-10"} aria-hidden="true">
      {tools[name] || solids[name]}
    </svg>
  );
}

function BigButton({ name }: { name: string }) {
  return (
    <button
      aria-label={name}
      className={`relative flex h-11 flex-1 items-center justify-center rounded-lg ${
        name === "Select" ? "bg-[#e6e5e4]" : ""
      }`}
    >
      <Glyph name={name} big />
      {withMenu.includes(name) && (
        <svg viewBox="0 0 6 6" className="absolute top-5 right-[6px] size-[6px]" aria-hidden="true">
          <path d="M0 0h6v6z" />
        </svg>
      )}
    </button>
  );
}

function SmallButton({ name }: { name: string }) {
  return (
    <button
      aria-label={name}
      className={`flex h-9 w-[47px] items-center justify-center rounded-lg ${
        name === "Shaded" ? "bg-[#e6e5e4]" : ""
      }`}
    >
      <svg viewBox="0 0 24 24" fill="none" className="size-6" aria-hidden="true">
        {small[name]}
      </svg>
    </button>
  );
}

function CloseDot() {
  return (
    <button aria-label="Close palette" className="size-[15px] rounded-full border border-[#b4b1b0] bg-[#d0cdcc]" />
  );
}

function Cells({ names }: { names: string[] }) {
  return (
    <div className="grid w-[108px] grid-cols-2 gap-[2px] bg-[#b2b2b2] p-[2px]">
      {names.map((name) => (
        <button
          key={name}
          aria-label={name}
          className={`flex h-[51px] items-center justify-center bg-linear-to-b ${
            name === "Select" ? "from-[#adadad] to-[#bdbdbd]" : "from-[#e6e6e6] to-[#f6f6f6]"
          } ${name === "Toggle Terrain" ? "*:opacity-60" : ""}`}
        >
          <Glyph name={name} />
        </button>
      ))}
    </div>
  );
}

function App() {
  return (
    <div className="flex h-screen flex-col overflow-hidden bg-white font-[Inter,'Liberation_Sans',sans-serif] text-[#1f1f1f]">
      <header className="shrink-0">
        <div className="flex h-[60px] items-start border-b-2 border-[#cfcecd] bg-[#f4f3f1]">
          <div className="flex w-[1290px] shrink-0">
            {mainTools.map((name) => (
              <BigButton key={name} name={name} />
            ))}
          </div>
          <div className="flex shrink-0 divide-x divide-[#e6e5e3] pt-[6px]">
            {views.map((name) => (
              <SmallButton key={name} name={name} />
            ))}
          </div>
          <div className="flex shrink-0 divide-x divide-[#e6e5e3] pt-[6px] pl-2">
            {styles.map((name) => (
              <SmallButton key={name} name={name} />
            ))}
          </div>
          <div className="flex w-[394px] shrink-0 pl-[10px]">
            {extras.map((name) => (
              <BigButton key={name} name={name} />
            ))}
          </div>
        </div>
        <div className="flex h-[38px] items-center justify-center bg-linear-to-b from-[#ebebeb] from-50% to-[#e3e3e3] to-50% pl-[380px]">
          <button className="h-7 rounded-md border border-[#cfcfcf] bg-white px-4 text-[17px] leading-6 shadow-sm">
            Page 1
          </button>
        </div>
        <div className="h-1 border-b border-[#ececec] bg-[#f7f7f7]" />
      </header>

      <main className="relative min-h-0 flex-1">
        <Vase />

        <section
          aria-label="Large tool set"
          className="absolute top-[149px] left-0 w-28 rounded-tr-xl rounded-br-xl border border-l-0 border-[#c4c4c4] bg-[#ececec] pb-[3px] shadow-[0_8px_24px_rgba(0,0,0,0.3)]"
        >
          <div className="flex h-[31px] items-center rounded-tr-xl bg-[#efebe9] pl-1">
            <CloseDot />
          </div>
          <div className="flex flex-col gap-[13px]">
            {largeToolSet.map((names) => (
              <Cells key={names[0]} names={names} />
            ))}
          </div>
        </section>

        <section
          aria-label="Advanced camera tools"
          className="absolute top-[52px] left-[174px] w-[60px] border border-[#c4c4c4] bg-[#ececec] shadow-[0_8px_24px_rgba(0,0,0,0.3)]"
        >
          <div className="flex h-5 items-center border-b-2 border-[#c4c4c4] bg-white pl-1">
            <button aria-label="Close palette" className="size-3 rounded-full border border-[#c6c6c6] bg-[#dcdcdc]" />
          </div>
          <div className="flex flex-col px-1 py-1">
            {cameraTools.map((tool) => (
              <button
                key={tool.name}
                aria-label={tool.name}
                disabled={!tool.enabled}
                className={`flex h-[51px] items-center justify-center border-2 bg-linear-to-b ${
                  tool.enabled
                    ? "border-[#aaaaaa] from-[#e8e8e8] to-[#f8f8f8]"
                    : "border-[#cccccc] from-[#e6e6e6] to-[#efefef] *:opacity-45"
                }`}
              >
                <Glyph name={tool.name} />
              </button>
            ))}
          </div>
        </section>

        <section
          aria-label="Location"
          className="absolute top-[57px] left-[261px] w-[117px] overflow-hidden rounded-xl border border-[#c4c4c4] bg-[#ececec] shadow-[0_8px_24px_rgba(0,0,0,0.3)]"
        >
          <div className="flex h-[31px] items-center bg-[#ece8e7] pl-2">
            <CloseDot />
          </div>
          <div className="flex justify-center">
            <Cells names={["Add Location", "Toggle Terrain"]} />
          </div>
        </section>

        <section
          aria-label="Solid tools"
          className="absolute top-[474px] left-[168px] w-[117px] rounded-xl border border-[#c4c4c4] bg-[#ececec] pb-1 shadow-[0_8px_24px_rgba(0,0,0,0.3)]"
        >
          <div className="flex h-8 items-center rounded-t-xl border-b border-[#d0d0d0] bg-[#efebe9] pl-2">
            <CloseDot />
          </div>
          <div className="flex justify-center pt-[2px]">
            <Cells names={["Outer Shell", "Intersect", "Union", "Subtract", "Trim", "Split"]} />
          </div>
        </section>

        <section
          aria-label="Shadow settings"
          className="absolute -top-1 right-0 h-[162px] w-[62px] overflow-hidden border border-r-0 border-[#c4c4c4] bg-[#ebebeb] shadow-[0_8px_24px_rgba(0,0,0,0.3)]"
        >
          <div className="flex h-7 items-center pl-[5px]">
            <button aria-label="Close panel" className="size-[18px] rounded-full border border-[#c4c4c4] bg-[#dfdfdf]" />
          </div>
          <button aria-label="Toggle shadows" className="ml-[22px] block pt-2">
            <svg viewBox="0 0 40 40" className="size-8" aria-hidden="true">
              {tools.Shadows}
            </svg>
          </button>
          <p className="mt-1 pl-11 text-lg leading-6 font-bold whitespace-nowrap">Time</p>
          <p className="mt-3 pl-[46px] text-lg leading-6 font-bold whitespace-nowrap">Date</p>
        </section>
      </main>

      <footer className="flex h-[46px] shrink-0 items-center bg-linear-to-b from-[#ececec] to-[#e0e0e0] pt-[2px] text-[21px]">
        <div className="flex items-center gap-[10px] pl-2">
          <button aria-label="Geo-location">
            <svg viewBox="0 0 28 28" className="size-7" aria-hidden="true">
              <circle cx="14" cy="14" r="12.500" fill="none" stroke="#999" strokeWidth="1.800" />
              <path d="M14 23c-1-5-5-7-5-12a5 5 0 0 1 10 0c0 5-4 7-5 12z" fill="#999" />
            </svg>
          </button>
          <button aria-label="Credits">
            <svg viewBox="0 0 28 28" className="size-7" aria-hidden="true">
              <circle cx="14" cy="14" r="12.500" fill="none" stroke="#999" strokeWidth="1.800" />
              <circle cx="14" cy="7.500" r="2.300" fill="#999" />
              <path d="M10.500 11h7v6h-1.500v6h-4v-6h-1.500z" fill="#999" />
            </svg>
          </button>
        </div>
        <div className="mx-[7px] h-8 w-px bg-[#cfcfcf]" />
        <button aria-label="Help">
          <svg viewBox="0 0 32 32" className="size-8" aria-hidden="true">
            <circle cx="16" cy="16" r="16" fill="#fff" />
            <circle cx="16" cy="16" r="13.200" fill="#1f3f87" stroke="#05070d" strokeWidth="2" />
            <text x="16" y="23" textAnchor="middle" fontSize="20" fontWeight="bold" fontFamily="Inter, sans-serif">
              ?
            </text>
          </svg>
        </button>
        <p className="flex-1 pl-[10px]">Select objects. Shift to extend select. Drag mouse to select multiple.</p>
        <p className="w-[88px] shrink-0 overflow-hidden whitespace-nowrap text-[#444]">Measurements</p>
      </footer>
    </div>
  );
}

export default App;
